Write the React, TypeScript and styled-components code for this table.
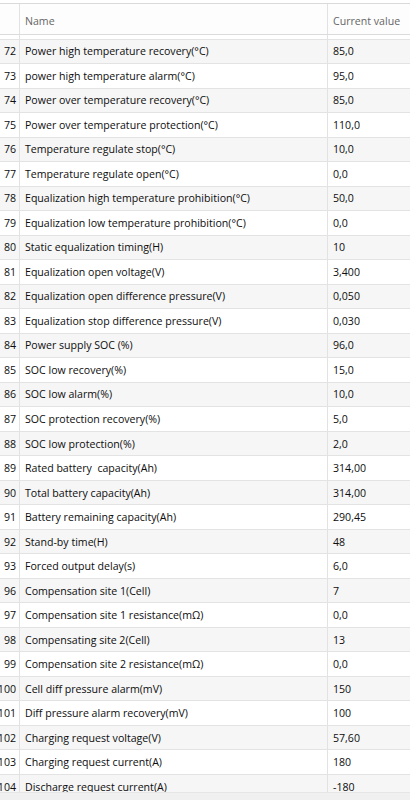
import React, { useLayoutEffect, useRef } from 'react';
import styled, { createGlobalStyle } from 'styled-components';

const GlobalStyle = createGlobalStyle`
  html, body {
    margin: 0;
    padding: 0;
    background: #ffffff;
  }
  body {
    font-family: "Open Sans", "Noto Sans", "Liberation Sans", sans-serif;
    font-size: 10.6px;
    color: #0d0d0d;
  }
`;

const ROW_H = 24.53;

const Page = styled.div`
  width: 410px;
  height: 800px;
  padding-top: 3px;
  box-sizing: border-box;
  display: flex;
  flex-direction: column;
  overflow: hidden;
`;

const Table = styled.div`
  flex: 1;
  display: flex;
  flex-direction: column;
  border-top: 1px solid #dadada;
  min-height: 0;
`;

const HeaderRow = styled.div`
  display: grid;
  grid-template-columns: 20px 308px 1fr;
  height: 30px;
  flex-shrink: 0;
  border-bottom: 1px solid #dcdcdc;
  background: #fdfdfd;
`;

const HeaderCell = styled.div<{ $last?: boolean }>`
  display: flex;
  align-items: center;
  padding: 3px 0 0 5px;
  color: #666666;
  border-right: ${p => (p.$last ? 'none' : '1px solid #e2e2e2')};
`;

const Body = styled.div`
  flex: 1;
  overflow: hidden;
  min-height: 0;
`;

const Row = styled.div<{ $shade: boolean }>`
  display: grid;
  grid-template-columns: 20px 308px 1fr;
  height: ${ROW_H}px;
  box-sizing: border-box;
  border-bottom: 1px solid #e3e3e3;
  background: ${p => (p.$shade ? '#f6f6f6' : '#ffffff')};
`;

const IndexCell = styled.div`
  display: flex;
  align-items: center;
  justify-content: flex-end;
  padding-right: 3px;
  overflow: hidden;
  white-space: nowrap;
  border-right: 1px solid #e2e2e2;
`;

const Cell = styled.div<{ $last?: boolean }>`
  display: flex;
  align-items: center;
  padding-left: 5px;
  white-space: pre;
  overflow: hidden;
  border-right: ${p => (p.$last ? 'none' : '1px solid #e2e2e2')};
`;

const ScrollTrack = styled.div`
  height: 7px;
  flex-shrink: 0;
  background: #f0f0f0;
  border-top: 1px solid #e6e6e6;
`;

const rows: [number, string, string][] = [
  [71, 'Power high temperature protection(°C)', '100,0'],
  [72, 'Power high temperature recovery(°C)', '85,0'],
  [73, 'power high temperature alarm(°C)', '95,0'],
  [74, 'Power over temperature recovery(°C)', '85,0'],
  [75, 'Power over temperature protection(°C)', '110,0'],
  [76, 'Temperature regulate stop(°C)', '10,0'],
  [77, 'Temperature regulate open(°C)', '0,0'],
  [78, 'Equalization high temperature prohibition(°C)', '50,0'],
  [79, 'Equalization low temperature prohibition(°C)', '0,0'],
  [80, 'Static equalization timing(H)', '10'],
  [81, 'Equalization open voltage(V)', '3,400'],
  [82, 'Equalization open difference pressure(V)', '0,050'],
  [83, 'Equalization stop difference pressure(V)', '0,030'],
  [84, 'Power supply SOC (%)', '96,0'],
  [85, 'SOC low recovery(%)', '15,0'],
  [86, 'SOC low alarm(%)', '10,0'],
  [87, 'SOC protection recovery(%)', '5,0'],
  [88, 'SOC low protection(%)', '2,0'],
  [89, 'Rated battery  capacity(Ah)', '314,00'],
  [90, 'Total battery capacity(Ah)', '314,00'],
  [91, 'Battery remaining capacity(Ah)', '290,45'],
  [92, 'Stand-by time(H)', '48'],
  [93, 'Forced output delay(s)', '6,0'],
  [96, 'Compensation site 1(Cell)', '7'],
  [97, 'Compensation site 1 resistance(mΩ)', '0,0'],
  [98, 'Compensating site 2(Cell)', '13'],
  [99, 'Compensation site 2 resistance(mΩ)', '0,0'],
  [100, 'Cell diff pressure alarm(mV)', '150'],
  [101, 'Diff pressure alarm recovery(mV)', '100'],
  [102, 'Charging request voltage(V)', '57,60'],
  [103, 'Charging request current(A)', '180'],
  [104, 'Discharge request current(A)', '-180'],
];

const App: React.FC = () => {
  const bodyRef = useRef<HTMLDivElement>(null);

  // table is scrolled so only the tail of row 71 peeks out
  useLayoutEffect(() => {
    if (bodyRef.current) bodyRef.current.scrollTop = ROW_H - 5;
  }, []);

  return (
    <Page>
      <GlobalStyle />
      <Table>
        <HeaderRow>
          <HeaderCell />
          <HeaderCell>Name</HeaderCell>
          <HeaderCell $last>Current value</HeaderCell>
        </HeaderRow>
        <Body ref={bodyRef}>
          {rows.map(([id, name, value], i) => (
            <Row key={id} $shade={i % 2 === 1}>
              <IndexCell>{id}</IndexCell>
              <Cell>{name}</Cell>
              <Cell $last>{value}</Cell>
            </Row>
          ))}
        </Body>
        <ScrollTrack />
      </Table>
    </Page>
  );
};

export default App;
